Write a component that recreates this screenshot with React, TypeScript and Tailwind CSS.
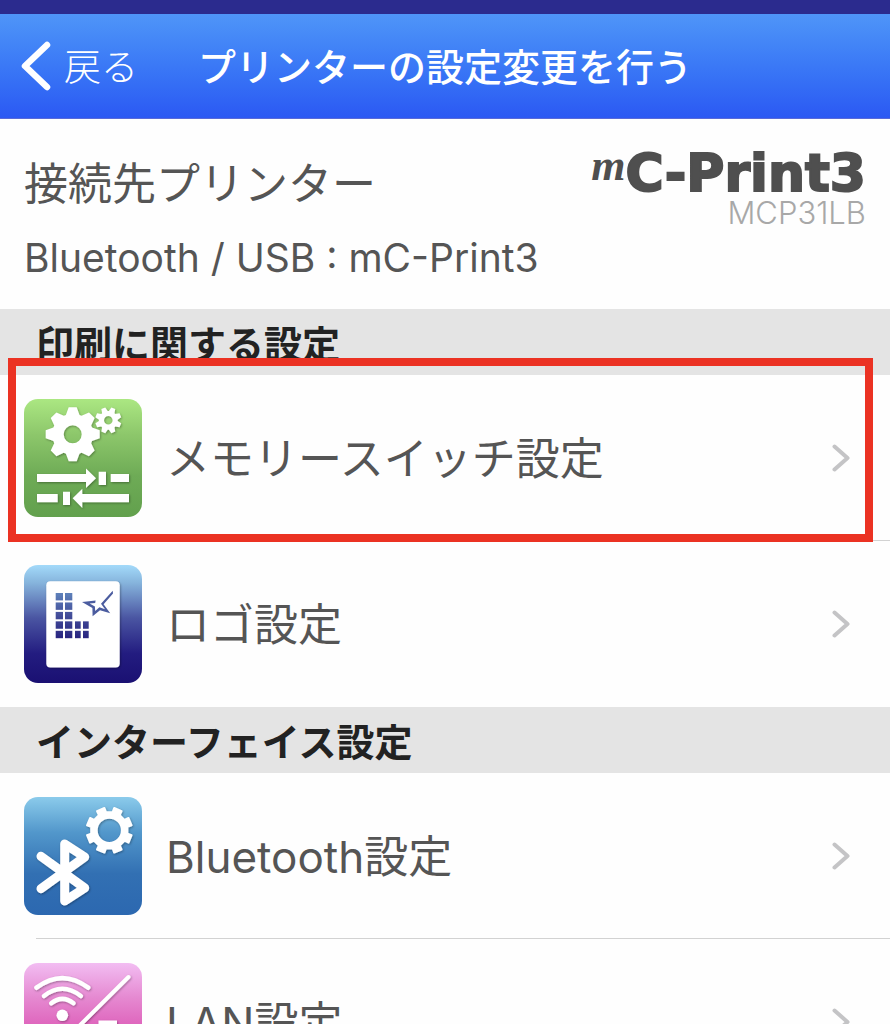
import type { ReactNode } from "react";

function gearPath(cx: number, cy: number, outer: number, root: number, hole: number, turn: number, base: number, tip: number) {
  const points: string[] = [];
  for (let i = 0; i < 8; i++) {
    const mid = ((i * 45 + turn - 90) * Math.PI) / 180;
    const corners = [
      [root, -base],
      [outer, -tip],
      [outer, tip],
      [root, base],
    ];
    for (const [r, half] of corners) {
      const along = Math.sqrt(r * r - half * half);
      const x = cx + along * Math.cos(mid) - half * Math.sin(mid);
      const y = cy + along * Math.sin(mid) + half * Math.cos(mid);
      points.push(`${x.toFixed(2)} ${y.toFixed(2)}`);
    }
  }
  return `M${points.join("L")}ZM${cx - hole} ${cy}a${hole} ${hole} 0 1 0 ${hole * 2} 0a${hole} ${hole} 0 1 0 ${-hole * 2} 0Z`;
}

function Tile({ id, stops, children }: { id: string; stops: [string, string][]; children: ReactNode }) {
  return (
    <svg viewBox="0 0 118 118" className="size-[118px] shrink-0" aria-hidden="true">
      <defs>
        <linearGradient id={id} x1="0" y1="0" x2="0" y2="1">
          {stops.map(([offset, color]) => (
            <stop key={offset} offset={offset} stopColor={color} />
          ))}
        </linearGradient>
        <filter id={`${id}-shadow`} x="-20%" y="-20%" width="140%" height="140%">
          <feDropShadow dx="0.8" dy="1" stdDeviation="0.9" floodColor="#000" floodOpacity="0.35" />
        </filter>
      </defs>
      <rect width="118" height="118" rx="14" fill={`url(#${id})`} />
      <g filter={`url(#${id}-shadow)`}>{children}</g>
    </svg>
  );
}

function MemorySwitchIcon() {
  return (
    <Tile id="green" stops={[["0", "#abe782"], ["0.3", "#8dc76b"], ["0.65", "#6eab56"], ["1", "#62a04d"]]}>
      <g fill="#fff">
        <path fillRule="evenodd" d={gearPath(48.7, 35.3, 27.3, 20.5, 9, 0, 6.8, 4)} />
        <path fillRule="evenodd" d={gearPath(84.3, 21.3, 13.2, 9.4, 4.3, 22.5, 3, 2.1)} />
        <path d="M13 75H62V69.5L72 79.3L62 89V83H13ZM74.7 72.7H82V86H74.7ZM86.7 75H105V83H86.7Z" />
        <path d="M13 95H33.7V103.3H13ZM39 92.7H46V106H39ZM48.7 99.3L58.3 89.7V95H105V103.3H58.3V109Z" />
      </g>
    </Tile>
  );
}

const logoCells = [
  [0, 0], [1, 0], [0, 1], [1, 1], [0, 2], [1, 2],
  [0, 3], [1, 3], [2, 3], [3, 3], [0, 4], [1, 4], [2, 4], [3, 4],
];
const cellX = [31.7, 41, 51, 59];
const cellWidth = [7.3, 7.3, 5.7, 5.7];

function LogoIcon() {
  return (
    <Tile id="navy" stops={[["0", "#a3dafa"], ["0.15", "#86b4dc"], ["0.45", "#4a55a2"], ["0.75", "#231c80"], ["1", "#1a1072"]]}>
      <rect x="22.3" y="16.3" width="73.4" height="86.2" rx="4" fill="#fff" />
      <linearGradient id="cells" gradientUnits="userSpaceOnUse" x1="0" y1="26" x2="0" y2="74">
        <stop offset="0" stopColor="#6086bd" />
        <stop offset="0.5" stopColor="#444e9a" />
        <stop offset="1" stopColor="#27237f" />
      </linearGradient>
      {logoCells.map(([col, row]) => (
        <rect key={`${col}-${row}`} x={cellX[col]} y={28 + row * 9.45} width={cellWidth[col]} height="7.4" fill="url(#cells)" />
      ))}
      <path
        fill="#4b5c9f"
        d="M88.7 25.8L89 28.5L79.6 39.2L86.2 48.2L76 45.2L68.6 51.2L68.4 43L58 37L71.6 35.4L71.2 38L65.6 38.4L70.9 41.4L71.2 46L75.4 42.2L81 44.2L77 38.8Z"
      />
    </Tile>
  );
}

function BluetoothIcon() {
  return (
    <Tile id="blue" stops={[["0", "#8bcbeb"], ["0.3", "#5297cb"], ["0.65", "#3270b3"], ["1", "#2c68b0"]]}>
      <path fillRule="evenodd" fill="#fff" stroke="#fff" strokeWidth="2" strokeLinejoin="round" d={gearPath(85.3, 33.3, 22.8, 18.4, 12.6, 22.5, 3.8, 4)} />
      <path d="M17 59.3L60.7 91L40.7 104V47L60.7 60L17 91.7" fill="none" stroke="#fff" strokeWidth="9" strokeLinecap="round" strokeLinejoin="round" />
    </Tile>
  );
}

function LanIcon() {
  return (
    <Tile id="pink" stops={[["0", "#f2bdf2"], ["0.3", "#e588d0"], ["0.55", "#de62bb"], ["1", "#d050a8"]]}>
      <g fill="none" stroke="#fff" strokeWidth="4.6" strokeLinecap="round">
        <path d="M12.5 24.7Q38.3 5.5 64.2 24.7" />
        <path d="M20 33Q38.3 18.5 56.8 33" />
        <path d="M27.3 40.2Q38.3 31.5 49.5 40.2" />
        <path d="M104.5 14L14 104" strokeWidth="4" />
      </g>
      <circle cx="38.3" cy="52.3" r="5.8" fill="#fff" />
      <path d="M74.5 57.5H93V72H102V92H66V72H74.5Z" fill="#fff" />
    </Tile>
  );
}

function Row({ icon, label, divided, highlighted }: { icon: ReactNode; label: string; divided?: boolean; highlighted?: boolean }) {
  return (
    <li className="relative">
      <a href="#" className="flex h-[165px] items-center gap-6 pl-6 pr-10">
        {icon}
        <span className="grow pt-0.5 text-[44px] leading-[60px]">{label}</span>
        <svg viewBox="0 0 18 28" className="h-7 w-[18px] shrink-0" aria-hidden="true">
          <path d="M2.5 2.5L15.5 14L2.5 25.5" fill="none" stroke="#c4c4c6" strokeWidth="4" strokeLinecap="round" strokeLinejoin="round" />
        </svg>
      </a>
      <div className={divided ? "ml-9 h-px bg-[#d2d2d2]" : "h-px"} />
      {highlighted && <div className="pointer-events-none absolute -bottom-px -top-[17px] left-2 right-[17px] border-8 border-[#eb3223]" />}
    </li>
  );
}

function SectionTitle({ children }: { children: ReactNode }) {
  return <h2 className="bg-[#e4e4e4] px-9 pb-1 pt-2 text-[38px] font-bold leading-[54px] text-[#222]">{children}</h2>;
}

export default function App() {
  return (
    <div className="h-screen overflow-y-auto bg-[#fefefe] font-['Inter','Noto_Sans_CJK_JP',sans-serif] text-[#555] [scrollbar-width:none]">
      <div className="h-[14px] bg-[#2b2b8e]" />
      <header className="flex h-[105px] items-center border-b border-[#5a6ad8] bg-linear-to-b from-[#4f95f8] to-[#2c58f3] pl-5 leading-[54px] text-white">
        <button type="button" className="flex items-center gap-3 text-[37px] font-light">
          <svg viewBox="0 0 32 50" className="h-[50px] w-8" aria-hidden="true">
            <path d="M27 4L5 25L27 46" fill="none" stroke="#fff" strokeWidth="6.5" strokeLinecap="round" strokeLinejoin="round" />
          </svg>
          <span className="pt-1">戻る</span>
        </button>
        <h1 className="ml-[60px] whitespace-nowrap pt-0.5 text-[38px] font-medium">プリンターの設定変更を行う</h1>
      </header>

      <section className="flex h-[190px] justify-between px-6">
        <div className="pt-[33px]">
          <p className="text-[44px] leading-[64px]">接続先プリンター</p>
          <p className="pt-3 text-[39px] leading-[60px]">Bluetooth / USB : mC-Print3</p>
        </div>
        <div className="pt-6 text-right">
          <p className="flex items-start justify-end font-bold leading-[60px] text-[#4f4f4f]">
            <span className="font-['Liberation_Serif',serif] text-[44px] italic leading-[46px]">m</span>
            <span className="font-['DejaVu_Sans',sans-serif] text-[52px] [-webkit-text-stroke:2px_#4f4f4f]">C-Print3</span>
          </p>
          <p className="text-[31px] font-light leading-5 text-[#a8a8a8]">MCP31LB</p>
        </div>
      </section>

      <SectionTitle>印刷に関する設定</SectionTitle>
      <ul>
        <Row icon={<MemorySwitchIcon />} label="メモリースイッチ設定" divided highlighted />
        <Row icon={<LogoIcon />} label="ロゴ設定" />
      </ul>
      <SectionTitle>インターフェイス設定</SectionTitle>
      <ul>
        <Row icon={<BluetoothIcon />} label="Bluetooth設定" divided />
        <Row icon={<LanIcon />} label="LAN設定" />
      </ul>
    </div>
  );
}
